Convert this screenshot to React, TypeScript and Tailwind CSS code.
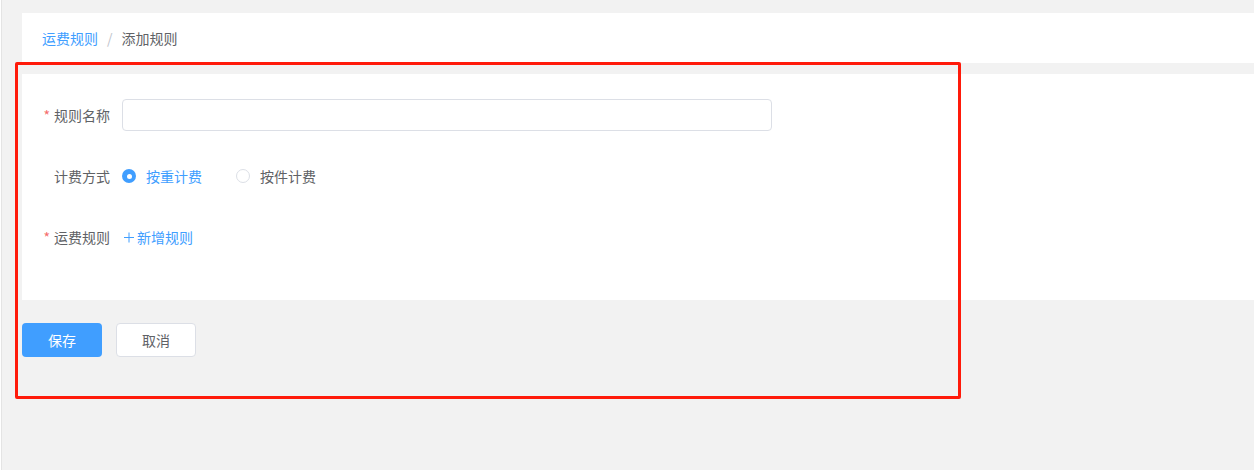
import React from "react";

const font = { fontFamily: '"Noto Sans CJK SC", "Noto Sans", sans-serif' };

const Label = ({ text, required }: { text: string; required?: boolean }) => (
  <div className="w-[80px] pr-3 flex justify-end items-center text-[14px] text-[#606266]">
    {required && <span className="text-[#f56c6c] mr-1">*</span>}
    {text}
  </div>
);

const Radio = ({ label, checked }: { label: string; checked?: boolean }) => (
  <label className="flex items-center mr-[34px]">
    {checked ? (
      <span className="w-[14px] h-[14px] rounded-full bg-[#409eff] flex items-center justify-center">
        <span className="w-[5px] h-[5px] rounded-full bg-white" />
      </span>
    ) : (
      <span className="w-[14px] h-[14px] rounded-full bg-white border border-[#dcdfe6]" />
    )}
    <span
      className={`ml-[10px] text-[14px] ${checked ? "text-[#409eff]" : "text-[#606266]"}`}
    >
      {label}
    </span>
  </label>
);

const App = () => {
  return (
    <div className="relative w-[1254px] h-[470px] overflow-hidden" style={font}>
      <div className="h-full ml-px border-l border-[#e4e4e4] bg-[#f2f2f2] pl-[20px] pt-[13px]">
        {/* Breadcrumb */}
        <div className="h-[50px] bg-white flex items-center pl-5 text-[14px]">
          <span className="text-[#409eff]">运费规则</span>
          <span className="text-[#c0c4cc] mx-[9px]">/</span>
          <span className="text-[#606266]">添加规则</span>
        </div>

        {/* Form */}
        <div className="mt-[11px] h-[226px] bg-white pt-[25px] pl-5">
          <div className="flex h-[32px]">
            <Label text="规则名称" required />
            <input className="w-[650px] h-[32px] border border-[#dcdfe6] rounded-[4px] outline-none px-3 text-[14px]" />
          </div>
          <div className="flex h-[32px] mt-[29px]">
            <Label text="计费方式" />
            <div className="flex items-center">
              <Radio label="按重计费" checked />
              <Radio label="按件计费" />
            </div>
          </div>
          <div className="flex h-[32px] mt-[29px]">
            <Label text="运费规则" required />
            <button className="flex items-center text-[14px] text-[#409eff] pl-[2px]">
              <svg width="10" height="11" viewBox="0 0 10 11" className="mr-[3px]">
                <path d="M5 0.5V10.5M0 5.5H10" stroke="#409eff" strokeWidth="1" fill="none" />
              </svg>
              新增规则
            </button>
          </div>
        </div>

        {/* Actions */}
        <div className="flex mt-[23px] gap-[14px]">
          <button className="w-[80px] h-[34px] rounded-[4px] bg-[#409eff] text-white text-[14px]">
            保存
          </button>
          <button className="w-[80px] h-[34px] rounded-[4px] bg-white border border-[#dcdfe6] text-[#606266] text-[14px]">
            取消
          </button>
        </div>
      </div>

      {/* annotation box */}
      <div className="absolute left-[15px] top-[62px] w-[946px] h-[337px] border-[3px] border-[#ff1a0a] rounded-[2px] pointer-events-none" />
    </div>
  );
};

export default App;
